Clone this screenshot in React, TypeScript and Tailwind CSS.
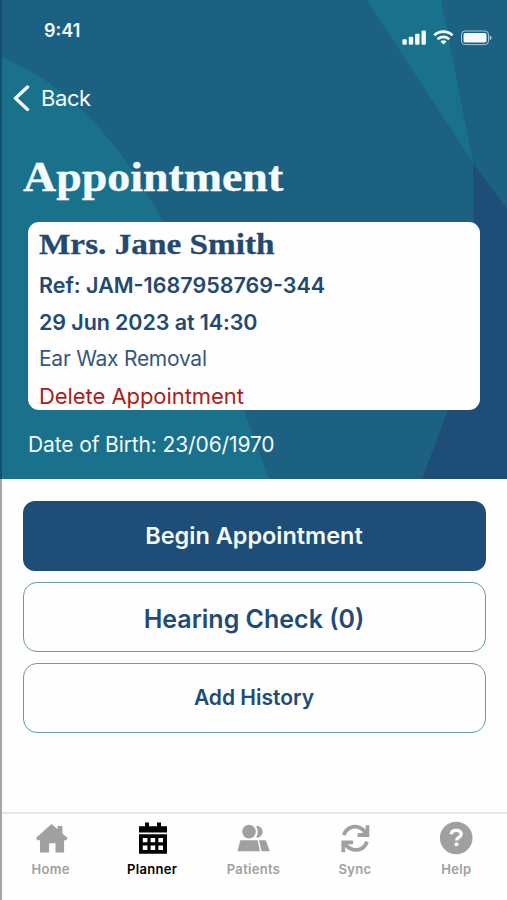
import type { ReactNode } from 'react';

const tabs: { label: string; active?: boolean; icon: ReactNode }[] = [
  {
    label: 'Home',
    icon: (
      <path d="M18.5 4 24.6 9.2V5.9h4.8v7.6l5.2 4.6-1.4 2.2h-2.1v12.2h-8.6v-9.2h-6.4v9.2H7V20.3H4.4L3 18.1Z" />
    ),
  },
  {
    label: 'Planner',
    active: true,
    icon: (
      <path
        fillRule="evenodd"
        d="M5 6.2h6V2.6h4v3.6h8V2.6h4v3.6h6v6.4H5ZM5 14.2h28v19.5H5ZM8.8 17.9v4.3h4.6v-4.3Zm7.8 0v4.3h4.6v-4.3Zm7.8 0v4.3H29v-4.3ZM8.8 25.6v4.3h4.6v-4.3Zm7.8 0v4.3h4.6v-4.3Zm7.8 0v4.3H29v-4.3Z"
      />
    ),
  },
  {
    label: 'Patients',
    icon: (
      <>
        <circle cx="14" cy="11.6" r="6.8" />
        <path d="M21 6.2a5.7 5.7 0 1 1 0 11.2c2.3-3.2 2.3-8 0-11.2ZM5.4 20.2h17.2l2.4 11H2.4ZM24 20.2h6.8l4 11h-8.3Z" />
      </>
    ),
  },
  {
    label: 'Sync',
    icon: (
      <>
        <path
          d="M6.7 15.2C10 5.6 21 3.4 28.6 12.4M30 21.6c-3.3 9.4-14.4 11.6-22 2.6"
          fill="none"
          stroke="currentColor"
          strokeWidth="3.8"
        />
        <path d="M28.6 5.2H32.3V17H20.6V13.3L26 12.8 28.6 10.6ZM4.4 20.4H16.1V24.1L10.7 24.6 8.1 26.8V32.2H4.4Z" />
      </>
    ),
  },
  {
    label: 'Help',
    icon: (
      <>
        <circle cx="18.2" cy="18" r="16.3" />
        <path
          d="M13.2 14.2c.6-5 10-5 10-.2 0 3.5-4.7 3.3-4.7 6.5"
          fill="none"
          stroke="white"
          strokeWidth="3.4"
        />
        <circle cx="18.5" cy="24.2" r="2" fill="white" />
      </>
    ),
  },
];

function StatusBar() {
  return (
    <div className="flex h-[60px] justify-between pl-[44px] pr-[15px]">
      <span className="pt-[19px] text-[18px] font-semibold leading-6">9:41</span>
      <svg width="90" height="18" viewBox="0 0 90 18" className="mt-[29px]" fill="currentColor">
        <rect x="0.4" y="10.3" width="4.4" height="5.4" rx="1" />
        <rect x="6.8" y="7.8" width="4.4" height="7.9" rx="1" />
        <rect x="13.1" y="4.8" width="4.4" height="10.9" rx="1" />
        <rect x="19.5" y="1.5" width="4.4" height="14.2" rx="1" />
        <g fill="none" stroke="currentColor" strokeWidth="2.8">
          <path d="M32.3 6.3c5.2-4.8 13-4.8 18.2 0M35.5 10.2c3.4-3 8.4-3 11.8 0" />
        </g>
        <path d="M38.4 12.4c1.8-1.5 4.4-1.5 6.2 0L41.5 15.6Z" />
        <rect x="59.5" y="2" width="27" height="13.6" rx="3.6" fill="none" stroke="currentColor" strokeOpacity="0.65" />
        <rect x="61.5" y="4" width="23" height="9.6" rx="1.8" />
        <path d="M87.7 6.5c2.6.8 2.6 3.8 0 4.6Z" opacity="0.7" />
      </svg>
    </div>
  );
}

function HeaderBackground() {
  return (
    <svg className="absolute inset-0" width="507" height="479" viewBox="0 0 507 479">
      <path d="M0 57C68 82 123 146 162 220C202 300 221 348 244 410L269 479H0Z" fill="#1a718b" />
      <path d="M367 0H441L473 163Z" fill="#1a718b" />
      <path d="M473 163 507 209V479H422L448 410 475 340Z" fill="#1e4d78" />
    </svg>
  );
}

export default function App() {
  return (
    <div className="relative flex h-[900px] w-[507px] flex-col overflow-hidden bg-[#fefefe] font-['Inter',sans-serif]">
      <header className="relative h-[479px] shrink-0 bg-[#1d6182] text-[#f4fafb]">
        <HeaderBackground />
        <div className="relative">
          <StatusBar />

          <button className="ml-[13px] mt-[22px] flex h-8 items-center gap-[11px]">
            <svg width="17" height="26" viewBox="0 0 17 26" fill="none" stroke="currentColor" strokeWidth="3.4">
              <path d="M14.5 2 2.5 13.2 14.5 24.5" strokeLinecap="round" strokeLinejoin="round" />
            </svg>
            <span className="text-[22px] leading-8 tracking-[-0.4px]">Back</span>
          </button>

          <h1 className="ml-[23px] mt-[38px] h-[70px] w-fit origin-left scale-x-[1.093] whitespace-nowrap font-['Liberation_Serif',serif] text-[42px] font-bold leading-[50px] [-webkit-text-stroke:0.4px]">
            Appointment
          </h1>

          <section className="ml-[28px] flex h-[188px] w-[452px] flex-col overflow-hidden rounded-[11px] bg-[#fefefe] pl-[11px] text-[22px] text-[#23496f]">
            <h2 className="h-[45px] w-fit origin-left scale-x-[1.108] whitespace-nowrap font-['Liberation_Serif',serif] text-[30px] font-bold leading-[43px] [-webkit-text-stroke:0.3px]">
              Mrs. Jane Smith
            </h2>
            <p className="h-[37px] pt-[2px] text-[21.5px] font-semibold leading-[36px]">Ref: JAM-1687958769-344</p>
            <p className="h-[37px] pt-[2px] text-[21.5px] font-semibold leading-[36px] tracking-[-0.1px]">
              29 Jun 2023 at 14:30
            </p>
            <p className="h-[37px] pt-[2px] text-[21px] leading-[36px] tracking-[-0.26px] text-[#34587b]">
              Ear Wax Removal
            </p>
            <p className="h-[37px] pt-[2px] leading-[36px] tracking-[-0.06px] text-[#aa1c1c]">Delete Appointment</p>
          </section>

          <p className="ml-[28px] mt-[17px] text-[21px] leading-9 tracking-[-0.12px]">Date of Birth: 23/06/1970</p>
        </div>
      </header>

      <main className="flex flex-1 flex-col gap-[11px] px-[22.5px] pt-[22px] text-[#1f4b77]">
        <button className="h-[70px] w-[463px] rounded-[12px] bg-[#1e4d78] text-[23.5px] font-semibold tracking-[-0.02px] text-[#f4fafb]">
          Begin Appointment
        </button>
        <button className="h-[70px] w-[463px] rounded-[14px] border-[1.5px] border-[#619da5] pt-[5px] text-[25px] font-semibold">
          Hearing Check (0)
        </button>
        <button className="h-[70px] w-[463px] rounded-[14px] border-[1.5px] border-[#619da5] text-[21px] font-semibold">
          Add History
        </button>
      </main>

      <nav className="grid h-[88px] shrink-0 grid-cols-5 border-t-2 border-[#e6e6e3]">
        {tabs.map((tab) => (
          <div
            key={tab.label}
            className={`flex flex-col items-center pt-[6px] ${tab.active ? 'text-black' : 'text-[#a0a0a0]'}`}
          >
            <svg width="36" height="36" viewBox="0 0 36 36" fill="currentColor">
              {tab.icon}
            </svg>
            <span className="mt-[3px] text-[13px] font-semibold leading-5 tracking-[0.3px]">{tab.label}</span>
          </div>
        ))}
      </nav>

      {/* thin screen edge */}
      <div className="absolute left-0 top-0 h-[479px] w-[2px] bg-[#174e68]" />
      <div className="absolute left-0 top-[479px] h-[421px] w-[2px] bg-[#a5a5a5]" />
    </div>
  );
}
